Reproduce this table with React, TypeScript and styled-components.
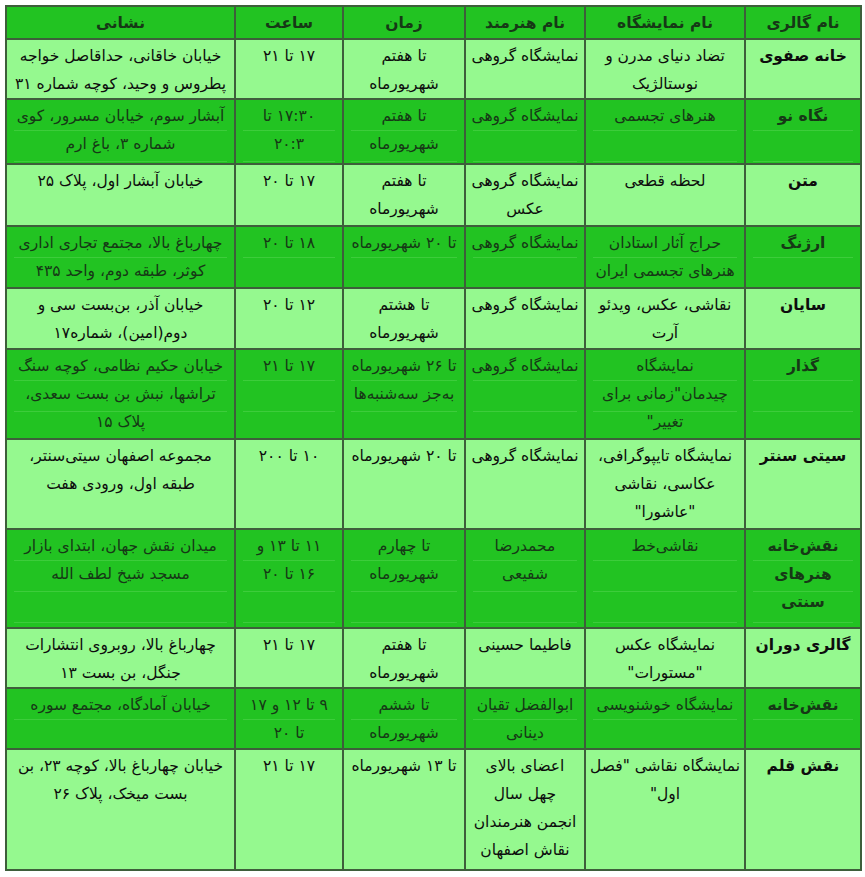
import React from "react";
import styled, { createGlobalStyle, css } from "styled-components";

const GlobalStyle = createGlobalStyle`
  html, body { margin: 0; padding: 0; background: #ffffff; }
  body { font-family: "DejaVu Sans", "Noto Sans", sans-serif; }
`;

const Page = styled.div`
  padding: 5px 0 0 5px;
`;

const Table = styled.table`
  direction: rtl;
  border-collapse: collapse;
  table-layout: fixed;
  width: 855px;
  font-family: "DejaVu Sans", "Noto Sans", sans-serif;
  font-size: 15.5px;
  line-height: 28px;
  border: 2px solid #5f705f;
`;

const HeadRow = styled.tr`
  height: 33px;
`;

const HeadCell = styled.th`
  background: #22c322;
  color: #163816;
  font-weight: bold;
  padding: 2px 3px 0;
  text-align: center;
  vertical-align: top;
  border: 2px solid #3e5e3b;
`;

const Row = styled.tr<{ $h: number }>`
  height: ${(p) => p.$h}px;
`;

const Cell = styled.td<{ $dark: boolean; $bold?: boolean }>`
  padding: 2px 3px 0;
  text-align: center;
  vertical-align: top;
  border: 2px solid #3e5e3b;
  font-weight: ${(p) => (p.$bold ? "bold" : "normal")};
  ${(p) =>
    p.$dark
      ? css`
          background-color: #22c322;
          color: #163816;
          background-image: repeating-linear-gradient(
            to bottom,
            transparent 0px,
            transparent 30px,
            rgba(200, 255, 190, 0.16) 30px,
            rgba(200, 255, 190, 0.16) 31px
          );
          background-size: calc(100% - 16px) 100%;
          background-repeat: no-repeat;
          background-origin: border-box;
          background-position: 8px 1px;
        `
      : css`
          background-color: #95f98f;
          color: #0d0d0d;
        `}
`;

const Line = styled.div`
  white-space: nowrap;
`;

type RowData = {
  h: number;
  cells: string[][];
};

const headers = ["نام گالری", "نام نمایشگاه", "نام هنرمند", "زمان", "ساعت", "نشانی"];
const widths = [116, 160, 120, 122, 108, 229];

const rows: RowData[] = [
  {
    h: 60,
    cells: [
      ["خانه صفوی"],
      ["تضاد دنیای مدرن و", "نوستالژیک"],
      ["نمایشگاه گروهی"],
      ["تا هفتم", "شهریورماه"],
      ["۱۷ تا ۲۱"],
      ["خیابان خاقانی، حداقاصل خواجه", "پطروس و وحید، کوچه شماره ۳۱"],
    ],
  },
  {
    h: 65,
    cells: [
      ["نگاه نو"],
      ["هنرهای تجسمی"],
      ["نمایشگاه گروهی"],
      ["تا هفتم", "شهریورماه"],
      ["۱۷:۳۰ تا", "۲۰:۳"],
      ["آبشار سوم، خیابان مسرور، کوی", "شماره ۳، باغ ارم"],
    ],
  },
  {
    h: 62,
    cells: [
      ["متن"],
      ["لحظه قطعی"],
      ["نمایشگاه گروهی", "عکس"],
      ["تا هفتم", "شهریورماه"],
      ["۱۷ تا ۲۰"],
      ["خیابان آبشار اول، پلاک ۲۵"],
    ],
  },
  {
    h: 62,
    cells: [
      ["ارژنگ"],
      ["حراج آثار استادان", "هنرهای تجسمی ایران"],
      ["نمایشگاه گروهی"],
      ["تا ۲۰ شهریورماه"],
      ["۱۸ تا ۲۰"],
      ["چهارباغ بالا، مجتمع تجاری اداری", "کوثر، طبقه دوم، واحد ۴۳۵"],
    ],
  },
  {
    h: 61,
    cells: [
      ["سایان"],
      ["نقاشی، عکس، ویدئو", "آرت"],
      ["نمایشگاه گروهی"],
      ["تا هشتم", "شهریورماه"],
      ["۱۲ تا ۲۰"],
      ["خیابان آذر، بن‌بست سی و", "دوم(امین)، شماره۱۷"],
    ],
  },
  {
    h: 90,
    cells: [
      ["گذار"],
      ["نمایشگاه", "چیدمان\"زمانی برای", "تغییر\""],
      ["نمایشگاه گروهی"],
      ["تا ۲۶ شهریورماه", "به‌جز سه‌شنبه‌ها"],
      ["۱۷ تا ۲۱"],
      ["خیابان حکیم نظامی، کوچه سنگ", "تراشها، نبش بن بست سعدی،", "پلاک ۱۵"],
    ],
  },
  {
    h: 90,
    cells: [
      ["سیتی سنتر"],
      ["نمایشگاه تایپوگرافی،", "عکاسی، نقاشی", "\"عاشورا\""],
      ["نمایشگاه گروهی"],
      ["تا ۲۰ شهریورماه"],
      ["۱۰ تا ۲۰۰"],
      ["مجموعه اصفهان سیتی‌سنتر،", "طبقه اول، ورودی هفت"],
    ],
  },
  {
    h: 99,
    cells: [
      ["نقش‌خانه", "هنرهای", "سنتی"],
      ["نقاشی‌خط"],
      ["محمدرضا", "شفیعی"],
      ["تا چهارم", "شهریورماه"],
      ["۱۱ تا ۱۳ و", "۱۶ تا ۲۰"],
      ["میدان نقش جهان، ابتدای بازار", "مسجد شیخ لطف الله"],
    ],
  },
  {
    h: 60,
    cells: [
      ["گالری دوران"],
      ["نمایشگاه عکس", "\"مستورات\""],
      ["فاطیما حسینی"],
      ["تا هفتم", "شهریورماه"],
      ["۱۷ تا ۲۱"],
      ["چهارباغ بالا، روبروی انتشارات", "جنگل، بن بست ۱۳"],
    ],
  },
  {
    h: 61,
    cells: [
      ["نقش‌خانه"],
      ["نمایشگاه خوشنویسی"],
      ["ابوالفضل تقیان", "دینانی"],
      ["تا ششم", "شهریورماه"],
      ["۹ تا ۱۲ و ۱۷", "تا ۲۰"],
      ["خیابان آمادگاه، مجتمع سوره"],
    ],
  },
  {
    h: 121,
    cells: [
      ["نقش قلم"],
      ["نمایشگاه نقاشی \"فصل", "اول\""],
      ["اعضای بالای", "چهل سال", "انجمن هنرمندان", "نقاش اصفهان"],
      ["تا ۱۳ شهریورماه"],
      ["۱۷ تا ۲۱"],
      ["خیابان چهارباغ بالا، کوچه ۲۳، بن", "بست میخک، پلاک ۲۶"],
    ],
  },
];

export default function App() {
  return (
    <>
      <GlobalStyle />
      <Page>
        <Table>
          <colgroup>
            {widths.map((w, i) => (
              <col key={i} style={{ width: w }} />
            ))}
          </colgroup>
          <thead>
            <HeadRow>
              {headers.map((h) => (
                <HeadCell key={h}>{h}</HeadCell>
              ))}
            </HeadRow>
          </thead>
          <tbody>
            {rows.map((r, ri) => (
              <Row key={ri} $h={r.h}>
                {r.cells.map((lines, ci) => (
                  <Cell key={ci} $dark={ri % 2 === 1} $bold={ci === 0}>
                    {lines.map((l, li) => (
                      <Line key={li}>{l}</Line>
                    ))}
                  </Cell>
                ))}
              </Row>
            ))}
          </tbody>
        </Table>
      </Page>
    </>
  );
}
